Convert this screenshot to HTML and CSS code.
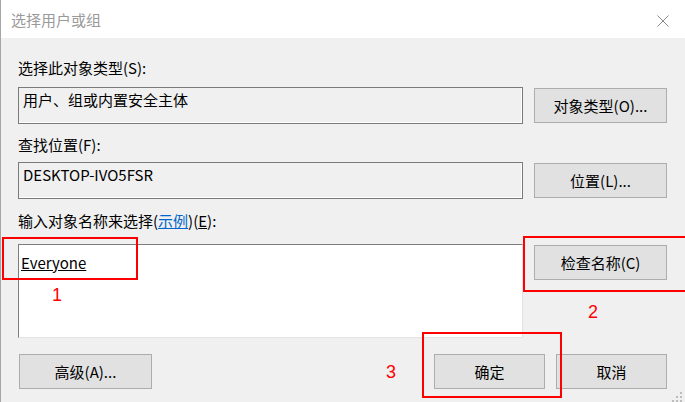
FILE: index.html
```html
<!DOCTYPE html>
<html lang="zh-CN">
<head>
<meta charset="utf-8">
<title>选择用户或组</title>
<link rel="stylesheet" href="styles.css">
</head>
<body>
<div class="dialog">
  <div class="titlebar">
    <span class="title">选择用户或组</span>
    <svg class="close" width="12" height="12" viewBox="0 0 12 12"><path d="M0.5 0.5 L11.5 11.5 M11.5 0.5 L0.5 11.5" stroke="#8a8a8a" stroke-width="1" fill="none"/></svg>
  </div>
  <div class="content">
    <div class="label l1">选择此对象类型(S):</div>
    <div class="row">
      <div class="field">用户、组或内置安全主体</div>
      <button class="btn side">对象类型(O)...</button>
    </div>
    <div class="label l2">查找位置(F):</div>
    <div class="row">
      <div class="field">DESKTOP-IVO5FSR</div>
      <button class="btn side">位置(L)...</button>
    </div>
    <div class="label l3">输入对象名称来选择(<span class="link">示例</span>)(<span class="ak">E</span>):</div>
    <div class="row">
      <div class="names"><span class="resolved">Everyone</span></div>
      <button class="btn side">检查名称(C)</button>
    </div>
    <div class="footer">
      <button class="btn adv">高级(A)...</button>
      <div class="spacer"></div>
      <button class="btn small">确定</button>
      <button class="btn small">取消</button>
    </div>
  </div>

  <div class="mark m1"></div>
  <div class="mark m2"></div>
  <div class="mark m3"></div>
  <span class="num n1">1</span>
  <span class="num n2">2</span>
  <span class="num n3">3</span>

  <svg class="grip" width="13" height="10" viewBox="0 0 13 10">
    <rect x="10" y="0" width="2" height="2" fill="#bdbdbd"/>
    <rect x="6" y="4" width="2" height="2" fill="#bdbdbd"/>
    <rect x="10" y="4" width="2" height="2" fill="#bdbdbd"/>
    <rect x="2" y="8" width="2" height="2" fill="#bdbdbd"/>
    <rect x="6" y="8" width="2" height="2" fill="#bdbdbd"/>
    <rect x="10" y="8" width="2" height="2" fill="#bdbdbd"/>
  </svg>
</div>
</body>
</html>
```

FILE: styles.css
```css
* { box-sizing: border-box; }

html, body {
  margin: 0;
  padding: 0;
  background: #f0f0f0;
}

body {
  font-family: "Noto Sans CJK SC", "Noto Sans", sans-serif;
  font-size: 15px;
  color: #000;
}

.dialog {
  position: relative;
  width: 685px;
  height: 402px;
  background: #f0f0f0;
  border-left: 1px solid #a6a6a6;
  overflow: hidden;
}

.titlebar {
  height: 38px;
  background: #fff;
  display: flex;
  align-items: center;
  justify-content: space-between;
  padding-left: 10px;
  padding-right: 16px;
}

.title {
  color: #9a9a9a;
  font-size: 15px;
  line-height: 20px;
  padding-top: 2px;
}

.close {
  display: block;
  margin-top: 3px;
}

.content {
  padding: 0 18px 0 17px;
}

.label {
  line-height: 20px;
  white-space: nowrap;
}

.l1 { margin-top: 20px; margin-bottom: 9px; }
.l2 { margin-top: 11px; margin-bottom: 7px; }
.l3 { margin-top: 12px; margin-bottom: 13px; }

.link {
  color: #0066cc;
  text-decoration: underline;
}

.ak { text-decoration: underline; }

.row {
  display: flex;
  align-items: flex-start;
  gap: 11px;
}

.field {
  flex: 1;
  height: 37px;
  border: 1px solid #7a7a7a;
  box-shadow: inset -1px -1px 0 #ffffff;
  background: #f0f0f0;
  padding: 2px 4px 0;
  line-height: 20px;
  white-space: nowrap;
}

.names {
  flex: 1;
  height: 94px;
  background: #fff;
  border: 1px solid;
  border-color: #7d7d7d #e3e3e3 #e3e3e3 #7d7d7d;
  padding: 8px 2px 0;
  line-height: 20px;
}

.resolved {
  text-decoration: underline;
}

.btn {
  font-family: inherit;
  font-size: 15px;
  color: #000;
  background: #e1e1e1;
  border: 1px solid #adadad;
  height: 35px;
  padding: 0;
  margin: 0;
  line-height: 20px;
  display: flex;
  align-items: center;
  justify-content: center;
}

.side {
  width: 133px;
  margin-top: 1px;
}

.footer {
  display: flex;
  align-items: flex-start;
  gap: 11px;
  margin-top: 16px;
}

.adv {
  width: 133px;
  margin-left: 1px;
}

.spacer { flex: 1; }

.small { width: 111px; }

.mark {
  position: absolute;
  border: 2px solid #ff0000;
}

.m1 { left: 1px; top: 237px; width: 136px; height: 43px; }
.m2 { left: 522px; top: 236px; width: 180px; height: 56px; }
.m3 { left: 421px; top: 332px; width: 140px; height: 66px; }

.num {
  position: absolute;
  color: #ff0000;
  font-family: "Liberation Sans", sans-serif;
  font-size: 18px;
  line-height: 20px;
}

.n1 { left: 51px; top: 285px; }
.n2 { left: 587px; top: 302px; }
.n3 { left: 385px; top: 362px; }

.grip {
  position: absolute;
  right: 2px;
  bottom: 0;
}
```
